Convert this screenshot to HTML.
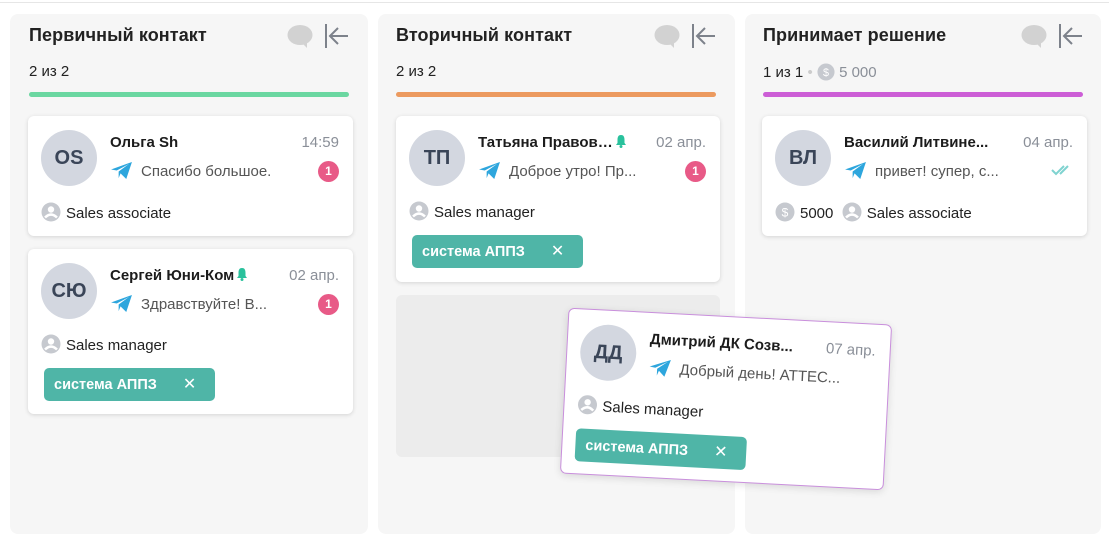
<!DOCTYPE html>
<html><head><meta charset="utf-8"><style>
*{box-sizing:border-box;margin:0;padding:0}
body{width:1109px;height:522px;background:#fff;font-family:"Liberation Sans","DejaVu Sans",sans-serif;position:relative;overflow:hidden;color:#1c1c1c}
.top{position:absolute;left:0;top:0;width:1109px;height:3px;border-bottom:1px solid #e6e6e6}
.col{position:absolute;top:14px;height:520px;background:#f6f6f6;border-radius:8px}
.title{position:absolute;top:25px;font-size:18px;font-weight:bold;color:#222;letter-spacing:.1px}
.count{position:absolute;top:63px;font-size:15px;color:#222}
.bar{position:absolute;top:92px;height:5px;border-radius:3px}
.bub{position:absolute;top:24px;width:26px;height:24px}
.arr{position:absolute;top:23px;width:26px;height:26px}
.card{position:absolute;background:#fff;border-radius:6px;box-shadow:0 1px 4px rgba(0,0,0,.14)}
.av{position:absolute;left:13px;top:14px;width:56px;height:56px;border-radius:50%;background:#d3d7e0;color:#3a4558;font-size:20px;font-weight:bold;text-align:center;line-height:56px}
.nm{position:absolute;left:82px;top:18px;font-size:15px;font-weight:bold;white-space:nowrap}
.nm svg{vertical-align:-1px;margin-left:2px}
.tm{position:absolute;right:14px;top:18px;font-size:15px;color:#8a8f98}
.msg{position:absolute;left:82px;top:45px;font-size:15px;color:#555;white-space:nowrap}
.msg svg{vertical-align:-4px;margin-right:8px}
.badge{position:absolute;right:14px;top:45px;width:21px;height:21px;border-radius:50%;background:#e85a87;color:#fff;font-size:12px;font-weight:bold;text-align:center;line-height:21px}
.role{position:absolute;left:13px;top:85px;font-size:15px;color:#222;white-space:nowrap}
.role svg,.cnt svg{vertical-align:-4px;margin-right:5px}
.tag{position:absolute;left:16px;width:171px;height:33px;border-radius:5px;background:#4fb5a7;color:#fff;font-size:14.5px;font-weight:bold;line-height:33px;padding-left:10px}
.tag span{margin-left:26px;font-weight:normal;font-size:16px}
</style></head><body>
<div class="top"></div>

<svg width="0" height="0" style="position:absolute"><defs>
<symbol id="tg" viewBox="0 0 24 20"><path d="M1 9 L23 1 L17 19 L11 13 L9 18 L9 11 L20 3 L7 10 Z" fill="#2ea6dd"/></symbol>
<symbol id="usr" viewBox="0 0 20 20"><circle cx="10" cy="10" r="9.5" fill="#c6c9cf"/><circle cx="10" cy="7.5" r="3.2" fill="#fff"/><path d="M4 15.5 Q10 9.5 16 15.5" stroke="#fff" stroke-width="2.5" fill="none"/></symbol>
<symbol id="usd" viewBox="0 0 20 20"><circle cx="10" cy="10" r="9.5" fill="#c6c9cf"/><text x="10" y="14.5" font-size="12" fill="#fff" text-anchor="middle" font-family="Liberation Sans">$</text></symbol>
<symbol id="bubble" viewBox="0 0 26 24"><ellipse cx="13" cy="11" rx="12.5" ry="10" fill="#d2d2d2"/><path d="M15 19 L20 24 L20 16 Z" fill="#d2d2d2"/></symbol>
<symbol id="back" viewBox="0 0 26 26"><path d="M2 1 V25 M24 13 H7 M14 5 L6 13 L14 21" stroke="#7d828b" stroke-width="2" fill="none"/></symbol>
<symbol id="bell" viewBox="0 0 12 14"><path d="M6 1 C3 1 2.5 3.5 2.5 6 L2.5 9 L1 11 H11 L9.5 9 V6 C9.5 3.5 9 1 6 1 Z" fill="#29c19c"/><circle cx="6" cy="12.5" r="1.5" fill="#29c19c"/></symbol>
</defs></svg>

<!-- column 1 -->
<div class="col" style="left:10px;width:358px"></div>
<div class="title" style="left:29px">Первичный контакт</div>
<svg class="bub" style="left:287px"><use href="#bubble"/></svg>
<svg class="arr" style="left:324px"><use href="#back"/></svg>
<div class="count" style="left:29px">2 из 2</div>
<div class="bar" style="left:29px;width:320px;background:#6bd7a1"></div>

<div class="card" style="left:28px;top:116px;width:325px;height:120px">
<div class="av">OS</div><div class="nm">Ольга Sh</div><div class="tm">14:59</div>
<div class="msg"><svg width="23" height="19"><use href="#tg"/></svg>Спасибо большое.</div>
<div class="badge">1</div>
<div class="role" style="top:86px"><svg width="20" height="20"><use href="#usr"/></svg>Sales associate</div>
</div>

<div class="card" style="left:28px;top:249px;width:325px;height:165px">
<div class="av" style="top:14px">СЮ</div><div class="nm">Сергей Юни-Ком<svg width="12" height="14"><use href="#bell"/></svg></div><div class="tm">02 апр.</div>
<div class="msg"><svg width="23" height="19"><use href="#tg"/></svg>Здравствуйте! В...</div>
<div class="badge">1</div>
<div class="role"><svg width="20" height="20"><use href="#usr"/></svg>Sales manager</div>
<div class="tag" style="top:119px">система АППЗ<span>✕</span></div>
</div>

<!-- column 2 -->
<div class="col" style="left:378px;width:357px"></div>
<div class="title" style="left:396px">Вторичный контакт</div>
<svg class="bub" style="left:654px"><use href="#bubble"/></svg>
<svg class="arr" style="left:691px"><use href="#back"/></svg>
<div class="count" style="left:396px">2 из 2</div>
<div class="bar" style="left:396px;width:320px;background:#ec9a5f"></div>

<div class="card" style="left:396px;top:116px;width:324px;height:166px">
<div class="av">ТП</div><div class="nm">Татьяна Правов…<svg width="12" height="14"><use href="#bell"/></svg></div><div class="tm">02 апр.</div>
<div class="msg"><svg width="23" height="19"><use href="#tg"/></svg>Доброе утро! Пр...</div>
<div class="badge">1</div>
<div class="role"><svg width="20" height="20"><use href="#usr"/></svg>Sales manager</div>
<div class="tag" style="top:119px">система АППЗ<span>✕</span></div>
</div>
<div style="position:absolute;left:396px;top:295px;width:324px;height:162px;background:#ececec;border-radius:6px"></div>

<!-- column 3 -->
<div class="col" style="left:745px;width:356px"></div>
<div class="title" style="left:763px">Принимает решение</div>
<svg class="bub" style="left:1021px"><use href="#bubble"/></svg>
<svg class="arr" style="left:1058px"><use href="#back"/></svg>
<div class="count" style="left:763px">1 из 1 <span style="color:#ccc">•</span> <svg width="18" height="18" style="vertical-align:-4px"><use href="#usd"/></svg> <span style="color:#8a8f98">5 000</span></div>
<div class="bar" style="left:763px;width:320px;background:#cc5ed6"></div>

<div class="card" style="left:762px;top:116px;width:325px;height:120px">
<div class="av">ВЛ</div><div class="nm">Василий Литвине...</div><div class="tm">04 апр.</div>
<div class="msg"><svg width="23" height="19"><use href="#tg"/></svg>привет! супер, с...</div>
<svg style="position:absolute;right:14px;top:48px" width="22" height="12" viewBox="0 0 22 12"><path d="M1 6 L5 10 L13 2 M9 10 L17 2" stroke="#7fd3d0" stroke-width="2" fill="none"/></svg>
<div class="role" style="top:86px"><span class="cnt"><svg width="20" height="20"><use href="#usd"/></svg></span>5000 &nbsp;<svg width="20" height="20"><use href="#usr"/></svg>Sales associate</div>
</div>

<!-- dragged card -->
<div class="card" style="left:564px;top:316px;width:324px;height:166px;transform:rotate(3deg);border:1px solid #c98fdc;box-shadow:0 2px 8px rgba(0,0,0,.12)">
<div class="av">ДД</div><div class="nm">Дмитрий ДК Созв...</div><div class="tm">07 апр.</div>
<div class="msg"><svg width="23" height="19"><use href="#tg"/></svg>Добрый день! ATTEC...</div>
<div class="role"><svg width="20" height="20"><use href="#usr"/></svg>Sales manager</div>
<div class="tag" style="top:119px;left:13px">система АППЗ<span>✕</span></div>
</div>
</body></html>
